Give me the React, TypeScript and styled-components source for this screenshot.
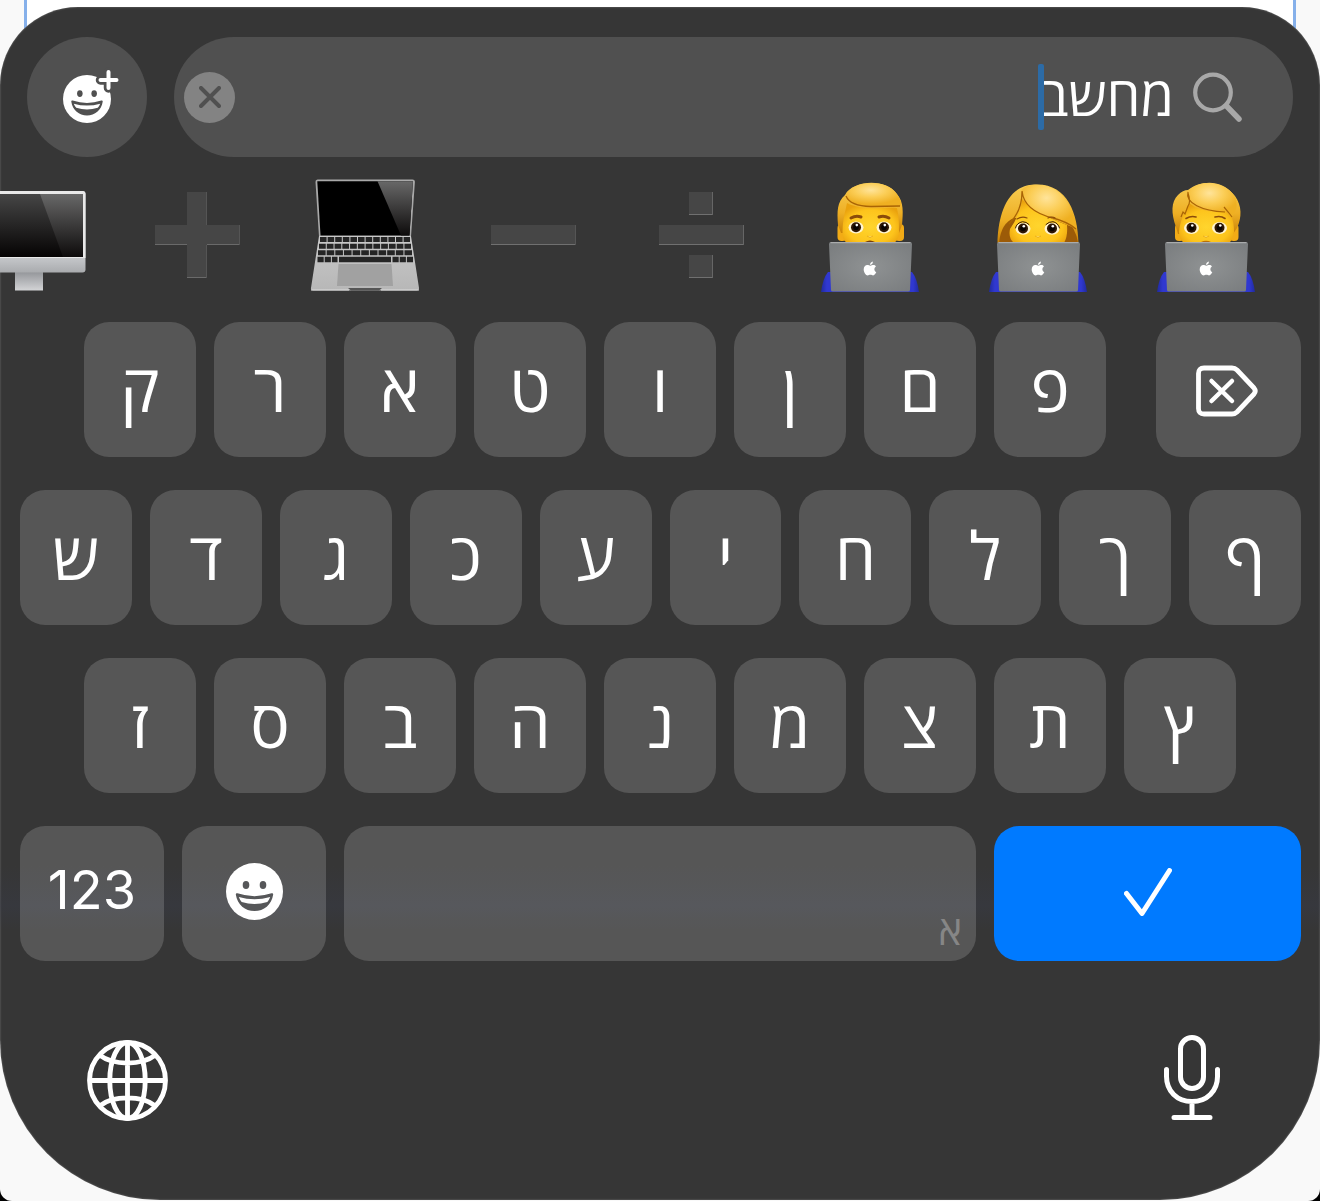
import React, { useState } from "react";
import styled, { createGlobalStyle } from "styled-components";

const GlobalStyle = createGlobalStyle`
  *, *::before, *::after { box-sizing: border-box; }
  body { margin: 0; background: #000; }
  button, input { font: inherit; color: inherit; border: 0; padding: 0; margin: 0; background: none; }
  button { cursor: pointer; }
  svg { display: block; flex: none; }
`;

const Page = styled.main`
  padding: 7px 0 1px;
  overflow: hidden;
  border-radius: 0 0 12px 12px;
  background:
    linear-gradient(90deg, #f9f9f9 24px, #86b0ea 24px 27px, #fff 27px calc(100% - 27px), #86b0ea calc(100% - 27px) calc(100% - 24px), #f9f9f9 calc(100% - 24px))
    0 0 / 100% 120px no-repeat, #f9f9f9;
  font-family: "Open Sans", "Noto Sans", "DejaVu Sans", sans-serif;
  color: #fff;
`;

const Keyboard = styled.section`
  padding-top: 30px;
  overflow: hidden;
  border-radius: 78px 78px 160px 160px;
  background: #363636;
  box-shadow: inset 0 0 2px rgba(255, 255, 255, 0.35);
`;

const TopBar = styled.div`
  display: flex;
  gap: 27px;
  padding: 0 27px;
`;

const RoundButton = styled.button`
  display: grid;
  place-items: center;
  width: 120px;
  height: 120px;
  border-radius: 50%;
  background: #505050;
`;

const SearchField = styled.div`
  flex: 1;
  min-width: 0;
  display: flex;
  align-items: center;
  height: 120px;
  padding: 0 50px 0 10px;
  border-radius: 60px;
  background: #505050;
`;

const SearchLabel = styled.label`
  display: flex;
  align-items: center;
  gap: 19px;
`;

const SearchInput = styled.input`
  field-sizing: content;
  height: 72px;
  padding-bottom: 4px;
  font-size: 54px;
  line-height: 68px;
  outline: none;
  caret-color: transparent;
`;

const Caret = styled.span`
  width: 6px;
  height: 66px;
  margin-inline-start: -4px;
  border-radius: 2px;
  background: #2c6ba6;
`;

const TypedText = styled.span`
  display: flex;
  align-items: center;
`;

const ClearButton = styled.button`
  display: grid;
  place-items: center;
  width: 51px;
  height: 51px;
  margin-inline-start: auto;
  border-radius: 50%;
  background: #838383;
`;

const EmojiStrip = styled.div`
  display: flex;
  justify-content: flex-end;
  height: 165px;
  padding: 0 31px 9px 0;
  overflow: hidden;
`;

const EmojiButton = styled.button`
  flex: none;
  display: grid;
  place-items: center;
  width: 168px;
`;

const Keys = styled.div`
  display: grid;
  gap: 33px;
`;

const KeyRow = styled.div<{ $tinted?: boolean }>`
  display: flex;
  gap: 18px;
  padding: 0 19px 0 20px;
  background: ${(p) =>
    p.$tinted
      ? "linear-gradient(rgba(56,60,76,0) 40px, rgba(56,60,76,.35) 80px, rgba(56,60,76,0) 104px)"
      : "none"};
`;

const Spacer = styled.span<{ $span: number }>`
  flex: ${(p) => p.$span} 1 0;
`;

const Key = styled.button<{ $span?: number; $accent?: boolean }>`
  flex: ${(p) => p.$span ?? 112} 1 0;
  min-width: 0;
  display: flex;
  align-items: center;
  justify-content: center;
  height: 135px;
  padding-bottom: 4px;
  border-radius: 25px;
  background: ${(p) => (p.$accent ? "#007aff" : "rgba(255, 255, 255, 0.16)")};
`;

const KeyLabel = styled.span`
  padding-bottom: 4px;
  font-size: 66px;
  line-height: 92px;
`;

const NumberLabel = styled(KeyLabel)`
  font-family: Inter, sans-serif;
  font-size: 54px;
`;

const SpaceLabel = styled.span`
  align-self: flex-end;
  margin-left: auto;
  padding-right: 14px;
  font-size: 40px;
  line-height: 54px;
  color: #868686;
`;

const BottomBar = styled.div`
  display: flex;
  align-items: flex-end;
  justify-content: space-between;
  padding: 74px 100px 79px 87px;
`;

const Face = ({ hole }: { hole: string }) => (
  <g>
    <circle cx="28.5" cy="28.5" r="28.5" fill="#fff" />
    <g fill={hole}>
      <ellipse cx="20" cy="22" rx="3.3" ry="4" />
      <ellipse cx="37" cy="22" rx="3.3" ry="4" />
      <path d="M9.800 31.500Q9.800 29.800 11.500 30.300Q28.500 36 45.500 30.300Q47.200 29.800 47.200 31.500C45.500 42 38 48 28.500 48S11.500 42 9.800 31.500Z" />
    </g>
    <path d="M12.800 34Q28.500 38.500 44.200 34Q43.300 36.500 41.300 39Q28.500 43 15.700 39Q13.700 36.500 12.800 34Z" fill="#fff" />
  </g>
);

const SmileyIcon = () => (
  <svg width="57" height="57" viewBox="0 0 57 57" aria-hidden="true">
    <Face hole="#565759" />
  </svg>
);

const AddEmojiIcon = () => (
  <svg width="64" height="60" viewBox="0 0 64 60" aria-hidden="true">
    <g transform="translate(8 8) scale(.842)">
      <Face hole="#505050" />
    </g>
    <g fill="none" strokeLinecap="round">
      <path d="M53.500 5v16M45.500 13h16" stroke="#505050" strokeWidth="9.500" />
      <path d="M53.500 5v16M45.500 13h16" stroke="#fff" strokeWidth="4" />
    </g>
  </svg>
);

const SearchIcon = () => (
  <svg width="50" height="50" viewBox="0 0 50 50" fill="none" stroke="#a8a8a8" strokeLinecap="round" aria-hidden="true">
    <circle cx="20" cy="20.500" r="17.800" strokeWidth="4.200" />
    <path d="M33.500 34L46 47" strokeWidth="5.500" />
  </svg>
);

const CrossIcon = () => (
  <svg width="22" height="22" viewBox="0 0 22 22" fill="none" stroke="#505050" strokeWidth="4" strokeLinecap="round" aria-hidden="true">
    <path d="M2 2l18 18M20 2L2 20" />
  </svg>
);

const DeleteIcon = () => (
  <svg width="66" height="59" viewBox="0 -7 66 59" fill="none" stroke="#fff" strokeWidth="4.800" strokeLinecap="round" strokeLinejoin="round" aria-hidden="true">
    <path d="M8 3H36Q39 3 41 5L58 23Q60.500 26 58 29L41 47Q39 49 36 49H8Q2.500 49 2.500 43.500V8.500Q2.500 3 8 3Z" />
    <path d="M15.500 16l20.500 20M36 16L15.500 36" strokeWidth="4.500" />
  </svg>
);

const CheckIcon = () => (
  <svg width="48" height="48" viewBox="0 0 48 48" fill="none" stroke="#fff" strokeWidth="5" strokeLinecap="round" strokeLinejoin="round" aria-hidden="true">
    <path d="M2.500 25.500L18 45.500L45.500 2.500" />
  </svg>
);

const GlobeIcon = () => (
  <svg width="81" height="81" viewBox="0 0 80 80" fill="none" stroke="#fff" strokeWidth="4.800" aria-hidden="true">
    <circle cx="40" cy="40" r="37.500" />
    <ellipse cx="40" cy="40" rx="17.500" ry="37.500" />
    <path d="M40 2v76M2 40h76M12.500 15C19 20 29 22.800 40 22.800S61 20 67.500 15M12.500 65C19 60 29 57.200 40 57.200S61 60 67.500 65" />
  </svg>
);

const MicIcon = () => (
  <svg width="56" height="86" viewBox="0 0 56 86" fill="none" stroke="#fff" strokeWidth="5" strokeLinecap="round" aria-hidden="true">
    <rect x="16.500" y="2.500" width="23" height="51" rx="11.500" />
    <path d="M2.500 34.500v7C2.500 56 13 66.500 28 66.500S53.500 56 53.500 41.500v-7M28 66.500V82M10 82.500h36" />
  </svg>
);

const PlusEmoji = () => (
  <g fill="#464646">
    <path d="M50 17h20v33h33v20h-33v33h-20v-33h-32v-20h32z" />
    <path d="M18 69.500h32M70 69.500h33M50 102.500h20" stroke="#6a6a6a" />
    <path d="M69.500 17v33M102.500 50v20M69.500 70v33" stroke="#555" />
  </g>
);

const MinusEmoji = () => (
  <g fill="#464646">
    <path d="M18 50h85v20h-85z" />
    <path d="M18 69.500h85" stroke="#707070" />
    <path d="M102.500 50v20" stroke="#555" />
  </g>
);

const DivideEmoji = () => (
  <g fill="#464646">
    <path d="M18 50h85v20h-85zM48 17h24v23h-24zM48 80h24v23h-24z" />
    <path d="M18 69.500h85M48 39.500h24M48 102.500h24" stroke="#707070" />
    <path d="M102.500 50v20M71.500 17v23M71.500 80v23" stroke="#666" />
  </g>
);

const DesktopEmoji = () => (
  <g>
    <path d="M46 97h28v18.500h-28z" fill="url(#stand)" />
    <rect x="3.500" y="16" width="113" height="81.500" rx="3" fill="url(#chin)" />
    <path d="M3.500 83V19q0-3 3-3h107q3 0 3 3v64z" fill="#e9e9e9" />
    <path d="M6 19h108v63H6z" fill="url(#screen)" />
    <path d="M71 19h43v63H94z" fill="url(#glare)" />
  </g>
);

const keyRows = [
  { y: 62, left: 15, right: 105, count: 12 },
  { y: 68.7, left: 14, right: 106, count: 12 },
  { y: 75.2, left: 13, right: 107, count: 11 },
];

const LaptopEmoji = () => (
  <g>
    <path d="M12.500 4.500h95q2.500 0 2.400 2.500L106 62H14L10.500 7q-.2-2.500 2-2.500z" fill="#a9a9a9" />
    <path d="M12.300 6.200h95.600L104.500 60.500h-89z" fill="#000" />
    <path d="M72.500 6.200h35.400L104.500 60.500H96z" fill="url(#glare)" />
    <path d="M14 61h92L114 113q.2 2.500-2 2.500H8q-2.500 0-2-2.500z" fill="url(#deck)" />
    {keyRows.map((row) => (
      <path
        key={row.y}
        d={`M${row.left} ${row.y + 2.5}H${row.right}`}
        stroke="#252525"
        strokeWidth="5"
        strokeDasharray={`${(row.right - row.left) / row.count - 0.9} 1`}
      />
    ))}
    <path d="M12.500 84.500h20M87.500 84.500h20.500" stroke="#252525" strokeWidth="5.500" strokeDasharray="6.200 1" />
    <path d="M34 84.500h52" stroke="#252525" strokeWidth="5.500" />
    <path d="M33.500 89h53l1.500 22H32z" fill="#a1a1a1" />
    <path d="M43 113h34l-3 2.500H46z" fill="#555" />
    <path d="M6 115h38M76 115h38" stroke="#ddd" />
  </g>
);

const AppleLaptop = () => (
  <g>
    <path d="M12 117q2-14 7-20h84q5 6 7 20z" fill="url(#shirt)" />
    <path d="M22 67h79q2 0 2 2l-2 46q0 1.500-2 1.500H24q-2 0-2-1.500L20 69q0-2 2-2z" fill="url(#lid)" />
    <path d="M21.500 67.700h80" stroke="#b5b7b8" />
    <g fill="#fff">
      <path d="M61.300 90.800c1.200 0 1.800-.7 3-.7 1.200 0 2 .5 2.600 1.300-2.200 1.500-1.900 4.600.4 5.600-.7 1.700-1.900 3.400-3.200 3.400-1 0-1.400-.6-2.700-.6s-1.700.6-2.700.6c-2 0-4-3.600-4-6 0-2.700 1.700-4.300 3.600-4.300 1.200 0 2.100.7 3 .7z" />
      <path d="M61 90c-.1-1.700 1.300-3.200 2.900-3.400.2 1.800-1.300 3.400-2.900 3.400z" />
    </g>
  </g>
);

const Eyes = ({ left, right, y }: { left: number; right: number; y: number }) => (
  <g>
    {[left, right].map((x) => (
      <g key={x}>
        <ellipse cx={x} cy={y + 0.3} rx="7.500" ry="6" fill="#fff4d0" />
        <circle cx={x} cy={y} r="5" fill="#2d1604" />
        <circle cx={x} cy={y} r="2.800" fill="#080300" />
        <circle cx={x + 0.8} cy={y - 2.2} r="1.300" fill="#fff" />
      </g>
    ))}
    <path d="M58 61q3 3 6 0" fill="#ffe063" stroke="#e5a10b" strokeWidth=".8" />
  </g>
);

const ManEmoji = () => (
  <g>
    <rect x="28.500" y="49" width="9" height="17" rx="4" fill="#f2ab16" />
    <rect x="86" y="49" width="9" height="17" rx="4" fill="#f2ab16" />
    <path d="M29 50C28 36 28 27 36 20C44 5 77 3 88 19C95 27 94 38 93 50L90 58H32z" fill="url(#hair)" />
    <path d="M33.500 56C34 43 36 38 38 28C53 36 73 32 88 33C90 43 90 48 90 57Q90 65 85 68H38Q33 65 33.500 56Z" fill="url(#skin)" />
    <path d="M37 19Q39 31 63 31.500L92 31Q93 26 87 18C77 4 46 5 37 19Z" fill="url(#shine)" />
    <path d="M37 21Q41 31 62 31.500L91 31" fill="none" stroke="#a96405" strokeWidth="1.300" />
    <path d="M42 43q5-3 10-1M70 42q5-2 10 1" fill="none" stroke="#8b4c0a" strokeWidth="3" strokeLinecap="round" />
    <Eyes left={47} right={75} y={52.3} />
    <path d="M56 67q5-3 10 0z" fill="#783e0a" />
    <AppleLaptop />
  </g>
);

const WomanEmoji = () => (
  <g>
    <path d="M20.500 68C21 42 29 10 58 9.500C90 8 101 38 101.500 68Z" fill="url(#hair)" />
    <path d="M22 68Q24 48 37 43H88Q99 53 101 68Z" fill="#9c5b08" />
    <path d="M33 54Q44 38 45 24Q60 39 90 50Q91 61 87 68H37Q31 63 33 54Z" fill="url(#skin)" />
    <path d="M44.500 15C46 36 72 42 100 54C95 25 80 7 54 10Q48 11 44.500 15Z" fill="url(#shine)" />
    <path d="M45 16Q47 36 76 43Q91 47 99 54M45 17Q45 36 32 49" fill="none" stroke="#a96405" strokeWidth="1.300" />
    <path d="M40 44q5-3 10-1M71 43q4-2 7 0" fill="none" stroke="#8b4c0a" strokeWidth="1.200" strokeLinecap="round" />
    <Eyes left={46} right={75} y={53.5} />
    <path d="M38.500 53q1-5 7-6.300q4 0 6.500 2.800M69 49.500q3-3 7-2.800q5 1 6.500 6.300" fill="none" stroke="#3a1a02" strokeWidth="1" strokeLinecap="round" />
    <AppleLaptop />
  </g>
);

const PersonEmoji = () => (
  <g>
    <rect x="30" y="49" width="9" height="17" rx="4" fill="#f2ab16" />
    <rect x="84.500" y="49" width="9" height="17" rx="4" fill="#f2ab16" />
    <path d="M31 52C26 38 26 27 33 20Q38 15 43 15C57 3 80 7 90 21C97 31 97 42 92 53L88 59H33z" fill="url(#hair)" />
    <path d="M34 57C35 46 39 38 44 28Q57 39 80 36L87 43Q89 48 89 57Q88 65 84 68H39Q34 64 34 57Z" fill="url(#skin)" />
    <path d="M42.500 16.500C39 28 57 36 80 37L79 31L84 38L87 42Q96 30 88 19C76 4 54 5 42.500 16.500Z" fill="url(#shine)" />
    <path d="M43 17C40 28 57 36 80 37M79 32L84 38L87 42M43 18Q46 27 43 31L40 39L38 37L36 42" fill="none" stroke="#a96405" strokeWidth="1.200" />
    <path d="M41 43.500q5-3 10-1.500M70 42q6-1.500 10 1.500" fill="none" stroke="#8b4c0a" strokeWidth="1.600" strokeLinecap="round" />
    <Eyes left={46.5} right={74.5} y={52.7} />
    <path d="M56 67q5-2.500 10 0z" fill="#b8700a" />
    <AppleLaptop />
  </g>
);

const EmojiDefs = () => (
  <svg width="0" height="0" aria-hidden="true">
    <defs>
      <linearGradient id="screen" x2="0" y2="1"><stop stopColor="#464646" /><stop offset="1" stopColor="#050303" /></linearGradient>
      <linearGradient id="glare" x2="0" y2="1"><stop stopColor="#686868" /><stop offset="1" stopColor="#0d0b0b" /></linearGradient>
      <linearGradient id="chin" x2="0" y2="1"><stop offset=".8" stopColor="#c8cacd" /><stop offset="1" stopColor="#a9abae" /></linearGradient>
      <linearGradient id="stand" x2="0" y2="1"><stop stopColor="#94969a" /><stop offset="1" stopColor="#d3d4d6" /></linearGradient>
      <linearGradient id="deck" x2="0" y2="1"><stop stopColor="#c9c9c9" /><stop offset="1" stopColor="#b7b7b7" /></linearGradient>
      <linearGradient id="shirt"><stop stopColor="#202a9c" /><stop offset=".06" stopColor="#3038d0" /><stop offset=".94" stopColor="#3038d0" /><stop offset="1" stopColor="#202a9c" /></linearGradient>
      <radialGradient id="lid" r=".7"><stop stopColor="#8f9293" /><stop offset="1" stopColor="#797c7e" /></radialGradient>
      <radialGradient id="skin" cy=".6" r=".6"><stop stopColor="#ffd52d" /><stop offset=".7" stopColor="#fdc41c" /><stop offset="1" stopColor="#eaa20e" /></radialGradient>
      <linearGradient id="hair" x2="0" y2="1"><stop stopColor="#f8cd53" /><stop offset=".6" stopColor="#eeaf24" /><stop offset="1" stopColor="#c98208" /></linearGradient>
      <radialGradient id="shine" cx=".45" cy=".3" r=".6"><stop stopColor="#ffe49a" /><stop offset=".5" stopColor="#fbcd55" /><stop offset="1" stopColor="#efb022" /></radialGradient>
    </defs>
  </svg>
);

const emojis = [
  { name: "מחשב שולחני", Art: DesktopEmoji },
  { name: "פלוס", Art: PlusEmoji },
  { name: "מחשב נייד", Art: LaptopEmoji },
  { name: "מינוס", Art: MinusEmoji },
  { name: "חילוק", Art: DivideEmoji },
  { name: "איש עם מחשב", Art: ManEmoji },
  { name: "אישה עם מחשב", Art: WomanEmoji },
  { name: "אדם עם מחשב", Art: PersonEmoji },
];

const row1 = ["ק", "ר", "א", "ט", "ו", "ן", "ם", "פ"];
const row2 = ["ש", "ד", "ג", "כ", "ע", "י", "ח", "ל", "ך", "ף"];
const row3 = ["ז", "ס", "ב", "ה", "נ", "מ", "צ", "ת", "ץ"];

export default function App() {
  const [query, setQuery] = useState("מחשב");
  const type = (letter: string) => setQuery((q) => q + letter);
  const letters = (row: string[]) =>
    row.map((letter) => (
      <Key key={letter} type="button" onClick={() => type(letter)}>
        <KeyLabel>{letter}</KeyLabel>
      </Key>
    ));

  return (
    <Page>
      <GlobalStyle />
      <Keyboard>
        <TopBar>
          <RoundButton type="button" aria-label="הוספת אמוג׳י">
            <AddEmojiIcon />
          </RoundButton>
          <SearchField dir="rtl">
            <SearchLabel htmlFor="emoji-search">
              <SearchIcon />
              <TypedText>
                <SearchInput
                  id="emoji-search"
                  aria-label="חיפוש אמוג׳י"
                  value={query}
                  onChange={(e) => setQuery(e.target.value)}
                />
                <Caret />
              </TypedText>
            </SearchLabel>
            <ClearButton type="button" aria-label="ניקוי" onClick={() => setQuery("")}>
              <CrossIcon />
            </ClearButton>
          </SearchField>
        </TopBar>

        <EmojiStrip>
          <EmojiDefs />
          {emojis.map(({ name, Art }) => (
            <EmojiButton key={name} type="button" aria-label={name}>
              <svg width="120" height="120" viewBox="0 0 120 120" aria-hidden="true">
                <Art />
              </svg>
            </EmojiButton>
          ))}
        </EmojiStrip>

        <Keys>
          <KeyRow>
            <Spacer $span={46} />
            {letters(row1)}
            <Spacer $span={14} />
            <Key type="button" $span={145} aria-label="מחיקה" onClick={() => setQuery((q) => q.slice(0, -1))}>
              <DeleteIcon />
            </Key>
          </KeyRow>
          <KeyRow>{letters(row2)}</KeyRow>
          <KeyRow>
            <Spacer $span={46} />
            {letters(row3)}
            <Spacer $span={47} />
          </KeyRow>
          <KeyRow $tinted>
            <Key type="button" $span={144}>
              <NumberLabel>123</NumberLabel>
            </Key>
            <Key type="button" $span={144} aria-label="אמוג׳י">
              <SmileyIcon />
            </Key>
            <Key type="button" $span={632} aria-label="רווח" onClick={() => type(" ")}>
              <SpaceLabel>א</SpaceLabel>
            </Key>
            <Key type="button" $span={307} $accent aria-label="אישור">
              <CheckIcon />
            </Key>
          </KeyRow>
        </Keys>

        <BottomBar>
          <button type="button" aria-label="החלפת שפה">
            <GlobeIcon />
          </button>
          <button type="button" aria-label="הכתבה">
            <MicIcon />
          </button>
        </BottomBar>
      </Keyboard>
    </Page>
  );
}
